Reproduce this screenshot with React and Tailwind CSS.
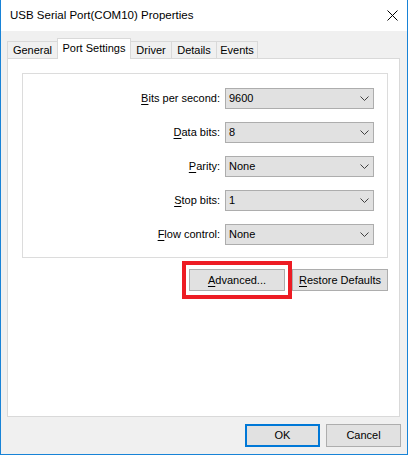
import React from 'react';

function Combo({ value }) {
  return (
    <div className="w-[149px] h-[21px] border border-[#adadad] bg-[#e1e1e1] flex items-center justify-between pl-[3px] pr-[4px]">
      <span>{value}</span>
      <svg width="9" height="5" viewBox="0 0 9 5" className="text-[#404040]">
        <polyline points="0.5,0.5 4.5,4.5 8.5,0.5" fill="none" stroke="currentColor" strokeWidth="1" />
      </svg>
    </div>
  );
}

function Row({ accel, rest, value }) {
  return (
    <div className="flex items-center justify-end gap-[5px] pr-[13px]">
      <span>
        <span className="underline underline-offset-2">{accel}</span>
        {rest}
      </span>
      <Combo value={value} />
    </div>
  );
}

function Tab({ label, width, selected, last, noLeft }) {
  if (selected) {
    return (
      <div
        className="relative z-10 -mb-px h-[21px] bg-white border-t border-l border-r border-[#d9d9d9] flex justify-center pt-[1px]"
        style={{ width }}
      >
        {label}
      </div>
    );
  }
  return (
    <div
      className={
        'h-[17px] bg-[#f0f0f0] border-t border-[#d9d9d9] flex justify-center items-center pt-[1px] ' +
        (noLeft ? '' : 'border-l ') +
        (last ? 'border-r' : '')
      }
      style={{ width }}
    >
      {label}
    </div>
  );
}

function Button({ children, className = '' }) {
  return (
    <div className={'h-[22px] border border-[#adadad] bg-[#e1e1e1] flex items-center justify-center ' + className}>
      {children}
    </div>
  );
}

export default function App() {
  return (
    <div className="w-[408px] h-[455px] flex flex-col border-l border-r border-b border-[#1883d7] font-['Liberation_Sans',Arial,sans-serif] text-[11px] text-black">
      {/* title bar */}
      <div className="h-[31px] bg-white flex items-center justify-between pl-[9px] pr-[9px] shrink-0">
        <span className="text-[11.5px]">USB Serial Port(COM10) Properties</span>
        <svg width="11" height="11" viewBox="0 0 11 11">
          <path d="M0.5 0.5 L10.5 10.5 M10.5 0.5 L0.5 10.5" stroke="#000" strokeWidth="1" />
        </svg>
      </div>

      <div className="flex-1 bg-[#f0f0f0] flex flex-col pl-[6px] pr-[7px] pt-[7px]">
        {/* tabs */}
        <div className="flex items-end h-[20px]">
          <Tab label="General" width={50} />
          <Tab label="Port Settings" width={74} selected />
          <Tab label="Driver" width={40} noLeft />
          <Tab label="Details" width={45} />
          <Tab label="Events" width={42} last />
        </div>

        {/* panel */}
        <div className="h-[359px] bg-white border border-[#d9d9d9] pl-[14px] pt-[14px]">
          <div className="w-[366px] border border-[#dcdcdc] pt-[14px] pb-[12px] flex flex-col gap-[13px]">
            <Row accel="B" rest="its per second:" value="9600" />
            <Row accel="D" rest="ata bits:" value="8" />
            <Row accel="P" rest="arity:" value="None" />
            <Row accel="S" rest="top bits:" value="1" />
            <Row accel="F" rest="low control:" value="None" />
          </div>

          <div className="w-[366px] flex justify-end mt-[3px]">
            <div className="border-4 border-[#ed1c24] px-[3px] py-[4px]">
              <Button className="w-[96px]">
                <span>
                  <span className="underline underline-offset-2">A</span>dvanced...
                </span>
              </Button>
            </div>
            <div className="pt-[8px]">
              <Button className="w-[96px]">
                <span>
                  <span className="underline underline-offset-2">R</span>estore Defaults
                </span>
              </Button>
            </div>
          </div>
        </div>

        {/* bottom buttons */}
        <div className="flex justify-end gap-[6px] mt-[7px] -mr-[1px]">
          <div className="w-[75px] h-[23px] border-2 border-[#0078d7] bg-[#e1e1e1] flex items-center justify-center">
            OK
          </div>
          <div className="w-[75px] h-[23px] border border-[#adadad] bg-[#e1e1e1] flex items-center justify-center">
            Cancel
          </div>
        </div>
      </div>
    </div>
  );
}
